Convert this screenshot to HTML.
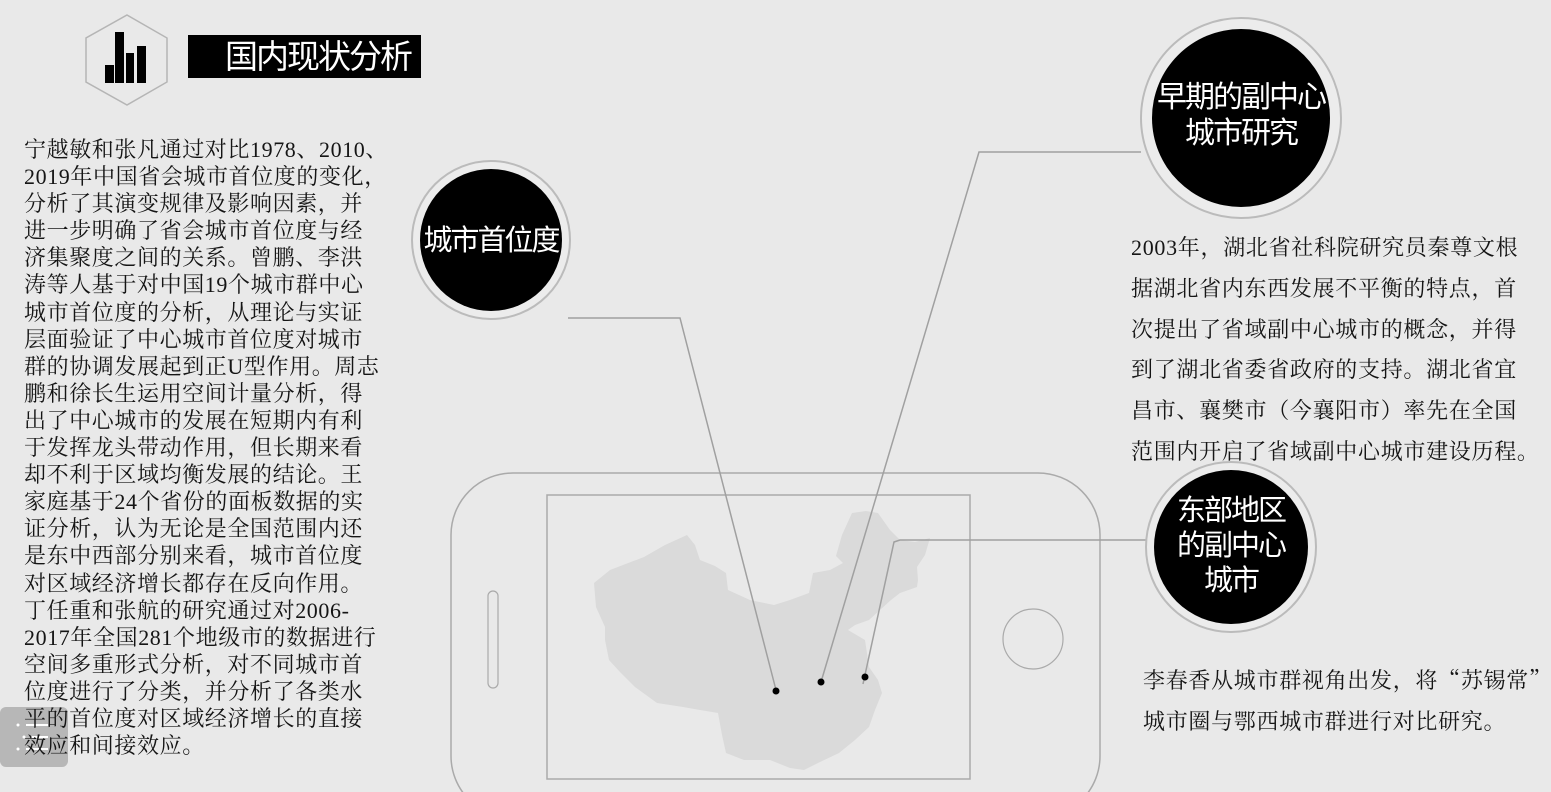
<!DOCTYPE html>
<html><head><meta charset="utf-8"><style>
html,body{margin:0;padding:0}
body{width:1551px;height:792px;background:#e9e9e9;position:relative;overflow:hidden;font-family:"Liberation Serif","Noto Serif CJK SC",serif;color:#111}
.abs{position:absolute}
.left{left:24px;top:136px;font-size:22px;letter-spacing:0.6px;line-height:27.1px;white-space:pre;color:#151515}
.right{left:1131px;top:228px;font-size:22px;letter-spacing:0.7px;line-height:40.8px;white-space:pre;color:#151515}
.br{left:1143px;top:660px;font-size:22px;letter-spacing:0.7px;line-height:40.8px;white-space:pre;color:#151515}
.ct{font-family:"Liberation Sans","Noto Sans CJK SC",sans-serif;color:#fff;text-align:center;white-space:pre;letter-spacing:-2px}
.q{font-family:"Noto Serif CJK SC",serif}
</style></head><body>
<svg class="abs" style="left:0;top:0" width="1551" height="792">
<polygon points="127,15 167,38 167,82 127,105 86,82 86,38" fill="none" stroke="#b5b5b5" stroke-width="1.5"/>
<rect x="105" y="65" width="9" height="18" fill="#000"/>
<rect x="115" y="32" width="9" height="51" fill="#000"/>
<rect x="126" y="53" width="8" height="30" fill="#000"/>
<rect x="137" y="46" width="9" height="37" fill="#000"/>
<rect x="188" y="35" width="233" height="43" fill="#000"/>
<rect x="451" y="473" width="649" height="345" rx="62" fill="none" stroke="#aaa" stroke-width="1.5"/>
<rect x="547" y="495" width="423" height="284" fill="none" stroke="#aaa" stroke-width="1.5"/>
<rect x="488" y="591" width="10" height="97" rx="5" fill="none" stroke="#aaa" stroke-width="1.2"/>
<ellipse cx="1033" cy="639" rx="30" ry="30" fill="none" stroke="#aaa" stroke-width="1.2"/>
<path d="M594,583 L610,570 L644,557 L665,545 L687,535 L695,545 L700,560 L715,566 L726,573 L728,590 L750,600 L774,605 L790,600 L809,593 L813,573 L830,570 L843,563 L836,556 L842,535 L852,513 L866,511 L878,513 L890,530 L900,540 L915,542 L930,538 L925,555 L917,567 L918,580 L917,587 L900,593 L891,600 L880,610 L869,620 L855,625 L848,630 L865,640 L869,667 L878,680 L882,693 L875,710 L869,727 L855,740 L839,753 L820,762 L804,770 L790,768 L770,760 L744,760 L726,753 L722,735 L718,713 L700,710 L683,707 L657,703 L635,687 L620,672 L609,660 L605,640 L605,627 L596,607 Z" fill="#dadada"/>
<g fill="none" stroke="#a0a0a0" stroke-width="1.5">
<polyline points="568,318 680,318 776,690"/>
<polyline points="1141,152 979,152 821,682"/>
<polyline points="1146,540 900,540 894,542 863,684"/>
</g>
<circle cx="776" cy="691" r="3.5" fill="#000"/>
<circle cx="821" cy="682" r="3.5" fill="#000"/>
<circle cx="865" cy="677" r="3.5" fill="#000"/>
<circle cx="491" cy="240" r="79" fill="#ececec" stroke="#bbb" stroke-width="2"/>
<circle cx="491" cy="240" r="71" fill="#000"/>
<circle cx="1241" cy="118" r="100" fill="#ececec" stroke="#bbb" stroke-width="2"/>
<circle cx="1241" cy="118" r="89" fill="#000"/>
<circle cx="1231" cy="547" r="85" fill="#ececec" stroke="#bbb" stroke-width="2"/>
<circle cx="1231" cy="547" r="77" fill="#000"/>
<rect x="0" y="707" width="68" height="60" rx="6" fill="rgba(150,150,150,0.6)"/>
<g fill="#fff"><circle cx="18" cy="725" r="1.5"/><circle cx="24" cy="737" r="1.5"/><circle cx="18" cy="749" r="1.5"/>
<rect x="26" y="724" width="22" height="2"/><rect x="30" y="736" width="18" height="2"/><rect x="26" y="748" width="22" height="2"/></g>
</svg>
<div class="abs ct" style="left:188px;top:35px;width:233px;height:43px;line-height:43px;font-size:33px;text-align:right;box-sizing:border-box;padding-right:10px">国内现状分析</div>
<div class="abs ct" style="left:411px;top:222px;width:160px;font-size:29px;line-height:38px">城市首位度</div>
<div class="abs ct" style="left:1141px;top:80px;width:200px;font-size:30px;line-height:36px">早期的副中心
城市研究</div>
<div class="abs ct" style="left:1131px;top:494px;width:200px;font-size:29px;line-height:35px">东部地区
的副中心
城市</div>
<div class="abs left">宁越敏和张凡通过对比1978、2010、
2019年中国省会城市首位度的变化，
分析了其演变规律及影响因素，并
进一步明确了省会城市首位度与经
济集聚度之间的关系。曾鹏、李洪
涛等人基于对中国19个城市群中心
城市首位度的分析，从理论与实证
层面验证了中心城市首位度对城市
群的协调发展起到正U型作用。周志
鹏和徐长生运用空间计量分析，得
出了中心城市的发展在短期内有利
于发挥龙头带动作用，但长期来看
却不利于区域均衡发展的结论。王
家庭基于24个省份的面板数据的实
证分析，认为无论是全国范围内还
是东中西部分别来看，城市首位度
对区域经济增长都存在反向作用。
丁任重和张航的研究通过对2006-
2017年全国281个地级市的数据进行
空间多重形式分析，对不同城市首
位度进行了分类，并分析了各类水
平的首位度对区域经济增长的直接
效应和间接效应。</div>
<div class="abs right">2003年，湖北省社科院研究员秦尊文根
据湖北省内东西发展不平衡的特点，首
次提出了省域副中心城市的概念，并得
到了湖北省委省政府的支持。湖北省宜
昌市、襄樊市（今襄阳市）率先在全国
范围内开启了省域副中心城市建设历程。</div>
<div class="abs br">李春香从城市群视角出发，将<span class="q">“</span>苏锡常<span class="q">”</span>
城市圈与鄂西城市群进行对比研究。</div>
</body></html>
